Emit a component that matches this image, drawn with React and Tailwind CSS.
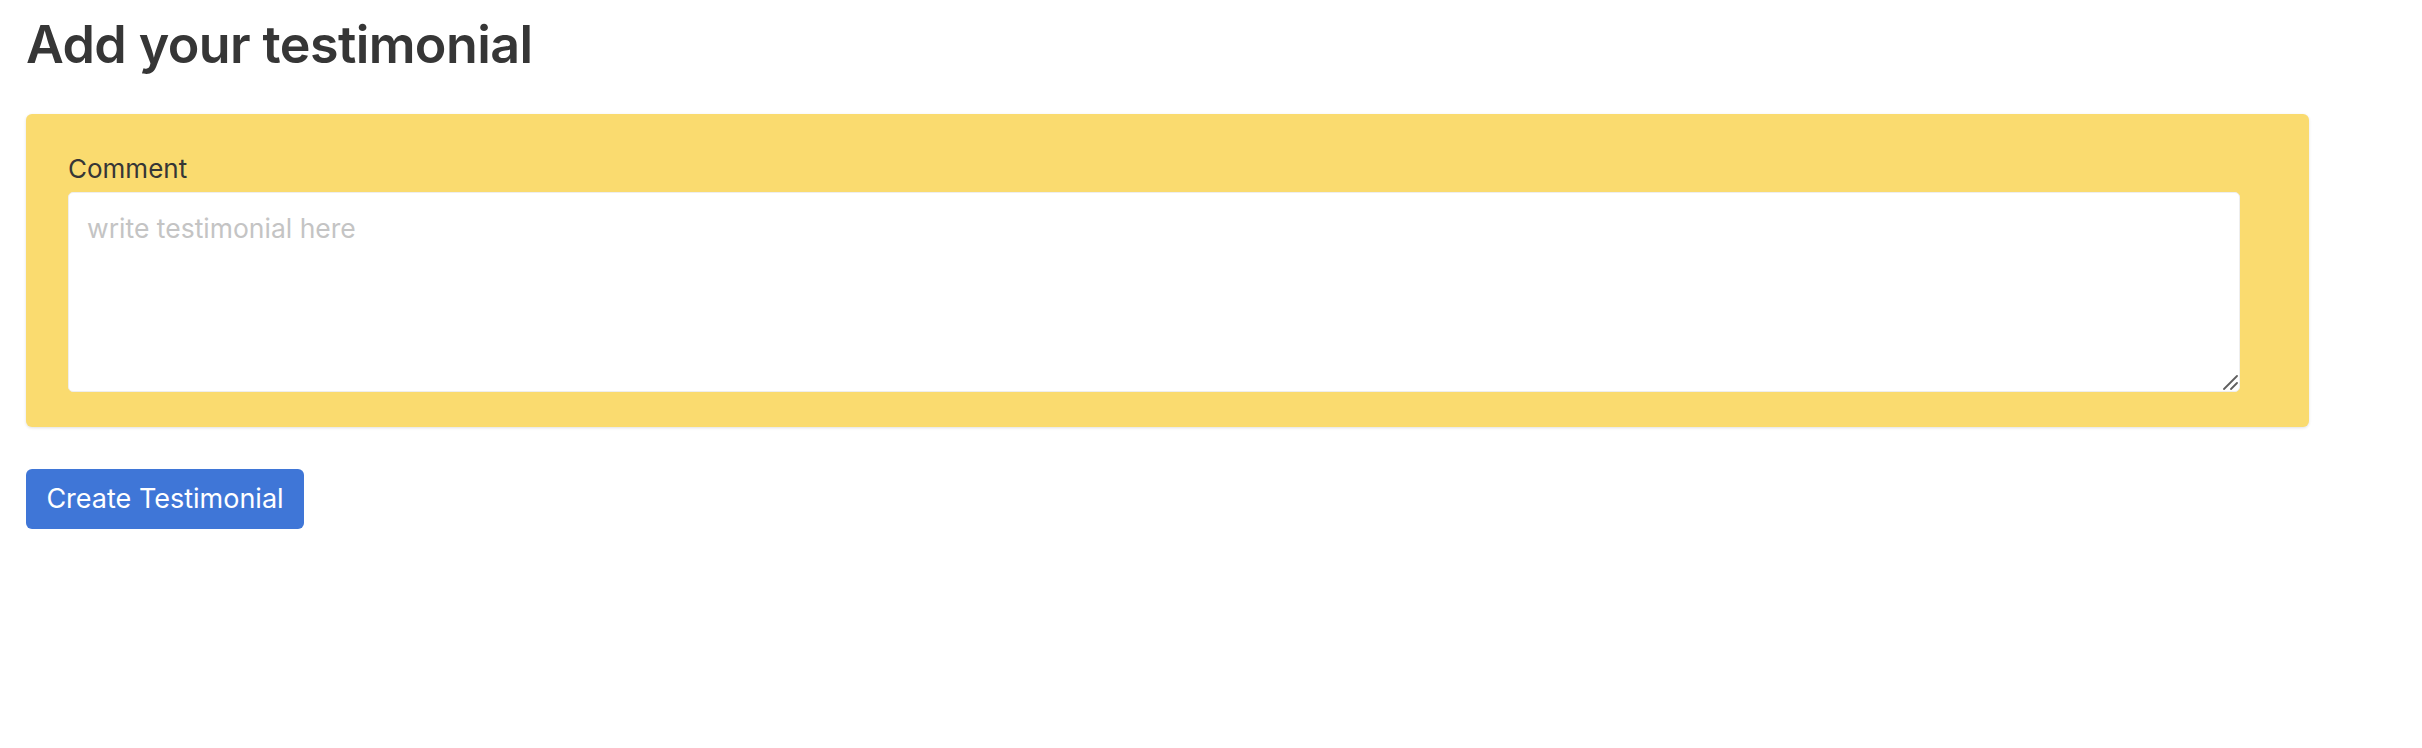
import React from "react";

const App = () => {
  return (
    <div className="min-h-[748px] bg-white px-[26px] pt-[14px] font-['Inter',sans-serif] text-[#363636]">
      {/* Heading */}
      <h1 className="text-[52px] font-semibold leading-[61px] tracking-[-0.6px]">
        Add your testimonial
      </h1>

      {/* Form box */}
      <div className="mt-[39px] w-[2283px] rounded-[6px] bg-[#fadb6f] pt-[35px] pb-[35px] pl-[42px] shadow-[0_1px_3px_rgba(10,10,10,0.12)]">
        <label className="block text-[26px] leading-[39px] text-[#363636]">
          Comment
        </label>
        <div className="relative mt-[4px] w-[2172px]">
          <textarea
            placeholder="write testimonial here"
            className="block h-[200px] w-full resize-none rounded-[5px] border border-[#eeeeee] bg-white px-[18px] py-[15px] text-[26.5px] leading-[40px] text-[#363636] placeholder:text-[#c4c4c4] focus:outline-none"
          />
          {/* resize grip */}
          <svg
            className="pointer-events-none absolute right-[2px] bottom-[2px]"
            width="16"
            height="16"
            viewBox="0 0 16 16"
          >
            <path d="M2 15 L15 2 M9 15 L15 9" stroke="#5f5f5f" strokeWidth="1.8" strokeLinecap="round" />
          </svg>
        </div>
      </div>

      {/* Submit */}
      <button className="mt-[42px] h-[60px] w-[278px] rounded-[6px] bg-[#3f76d7] text-[27px] text-white">
        Create Testimonial
      </button>
    </div>
  );
};

export default App;
